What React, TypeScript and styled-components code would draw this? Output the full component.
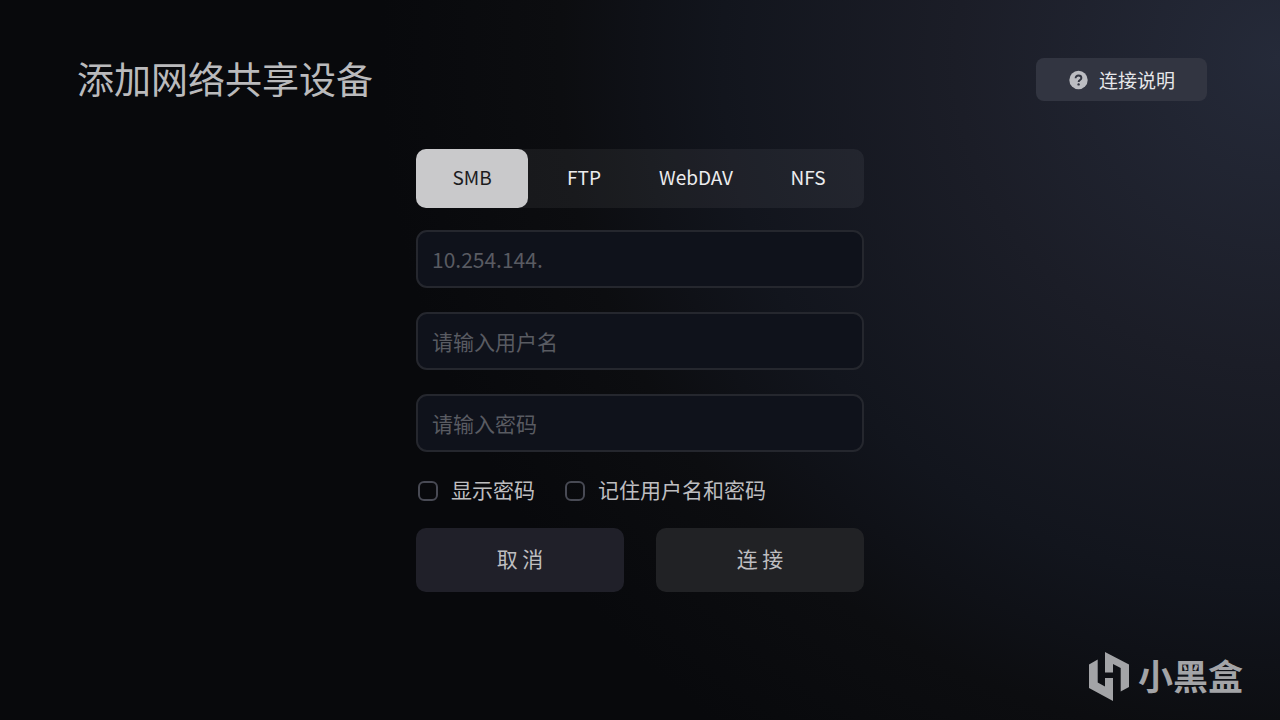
import React, { useState } from "react";
import styled, { createGlobalStyle } from "styled-components";

const GlobalStyle = createGlobalStyle`
  *, *::before, *::after { box-sizing: border-box; }
  body {
    margin: 0;
    background: #08090c;
    font-family: "Noto Sans CJK SC", "Noto Sans", sans-serif;
  }
  button, input { font-family: inherit; }
`;

const Page = styled.div`
  min-height: 100vh;
  display: flex;
  flex-direction: column;
  background: radial-gradient(ellipse 900px 855px at 100% 8%, #252a39 0%, #1b1d27 36%, #12151d 62%, #0f1117 71%, #0c0d10 80%, #08090c 100%);
`;

const Header = styled.header`
  display: flex;
  align-items: flex-start;
  justify-content: space-between;
  padding: 58px 73px 0 77px;
`;

const Title = styled.h1`
  margin: 0;
  font-size: 37px;
  line-height: 40px;
  font-weight: 400;
  color: #bababc;
`;

const HelpButton = styled.button`
  display: flex;
  align-items: center;
  justify-content: center;
  gap: 11px;
  height: 43px;
  padding: 0 32px;
  border: 0;
  border-radius: 8px;
  background: #323541;
  color: #e6e7ea;
  font-size: 19px;
  line-height: 28px;
`;

const Form = styled.form`
  width: 448px;
  margin: 48px auto 0;
  display: flex;
  flex-direction: column;
`;

const Tabs = styled.div`
  display: grid;
  grid-template-columns: repeat(4, 1fr);
  height: 59px;
  margin-bottom: 22px;
  border-radius: 10px;
  background: rgba(255, 255, 255, 0.055);
`;

const Tab = styled.button<{ $active: boolean }>`
  padding: 0 0 4px;
  border: 0;
  border-radius: 10px;
  background: ${(p) => (p.$active ? "#c9c9cb" : "transparent")};
  color: ${(p) => (p.$active ? "#1c1c1e" : "#ececee")};
  font-size: 19px;
  line-height: 28px;
`;

const Fields = styled.div`
  display: flex;
  flex-direction: column;
  gap: 24px;
`;

const Field = styled.input`
  width: 100%;
  height: 58px;
  padding: 0 14px;
  border: 2px solid #25272e;
  border-radius: 11px;
  outline: none;
  background: #0f121b;
  color: #c4c4c6;
  font-size: 21px;
  &::placeholder { color: #595b62; opacity: 1; }
`;

const Options = styled.div`
  display: flex;
  gap: 30px;
  padding: 23px 2px 22px;
`;

const Option = styled.label`
  display: flex;
  align-items: center;
  gap: 13px;
  font-size: 21px;
  line-height: 31px;
  color: #bebec0;
`;

const OptionText = styled.span`
  padding-bottom: 2px;
  line-height: 29px;
`;

const Checkbox = styled.input`
  appearance: none;
  width: 20px;
  height: 20px;
  margin: 0;
  border: 2px solid #484a54;
  border-radius: 6px;
  &:checked { background: #c9c9cb; }
`;

const Actions = styled.div`
  display: grid;
  grid-template-columns: 1fr 1fr;
  gap: 32px;
`;

const Action = styled.button<{ $tone: "violet" | "grey" }>`
  height: 64px;
  padding: 0 0 4px;
  border: 0;
  border-radius: 10px;
  background: ${(p) => (p.$tone === "violet" ? "#202029" : "#212225")};
  color: #bebec0;
  font-size: 21px;
  line-height: 31px;
`;

const Footer = styled.footer`
  display: flex;
  align-items: center;
  justify-content: flex-end;
  gap: 8px;
  margin-top: auto;
  padding: 0 37px 19px 0;
  color: #a3a4a7;
`;

const Brand = styled.span`
  font-size: 35px;
  line-height: 48px;
  padding-bottom: 2px;
  font-weight: 700;
`;

const protocols = ["SMB", "FTP", "WebDAV", "NFS"];

export default function App() {
  const [protocol, setProtocol] = useState("SMB");
  const [visible, setVisible] = useState(false);
  return (
    <Page>
      <GlobalStyle />
      <Header>
        <Title>添加网络共享设备</Title>
        <HelpButton type="button">
          <svg width="20" height="20" viewBox="0 0 20 20" aria-hidden="true">
            <circle cx="10.5" cy="10" r="9.2" fill="#bcbdc2" />
            <path d="M7.6 8.2C7.6 6.4 8.8 5.5 10.5 5.5s2.9 1 2.9 2.5c0 1.900-2.800 2.100-2.800 4" fill="none" stroke="#323541" strokeWidth="1.9" />
            <circle cx="10.600" cy="14.4" r="1.200" fill="#323541" />
          </svg>
          连接说明
        </HelpButton>
      </Header>
      <Form onSubmit={(e) => e.preventDefault()}>
        <Tabs role="tablist">
          {protocols.map((name) => (
            <Tab
              key={name}
              type="button"
              role="tab"
              aria-selected={name === protocol}
              $active={name === protocol}
              onClick={() => setProtocol(name)}
            >
              {name}
            </Tab>
          ))}
        </Tabs>
        <Fields>
          <Field aria-label="服务器地址" placeholder="10.254.144." />
          <Field aria-label="用户名" placeholder="请输入用户名" />
          <Field aria-label="密码" type={visible ? "text" : "password"} placeholder="请输入密码" />
        </Fields>
        <Options>
          <Option>
            <Checkbox type="checkbox" checked={visible} onChange={(e) => setVisible(e.target.checked)} />
            <OptionText>显示密码</OptionText>
          </Option>
          <Option>
            <Checkbox type="checkbox" />
            <OptionText>记住用户名和密码</OptionText>
          </Option>
        </Options>
        <Actions>
          <Action type="button" $tone="violet">取 消</Action>
          <Action type="submit" $tone="grey">连 接</Action>
        </Actions>
      </Form>
      <Footer>
        <svg width="42" height="50" viewBox="0 0 42 50" fill="currentColor" aria-hidden="true">
          <path d="M1 13.500L9.700 8.500V31.500L17 35.500V27H25V50L1 37Z" />
          <path d="M17 1L41 13.500V36L32.700 40.500V17L25 13V21.500H17Z" />
        </svg>
        <Brand>小黑盒</Brand>
      </Footer>
    </Page>
  );
}
